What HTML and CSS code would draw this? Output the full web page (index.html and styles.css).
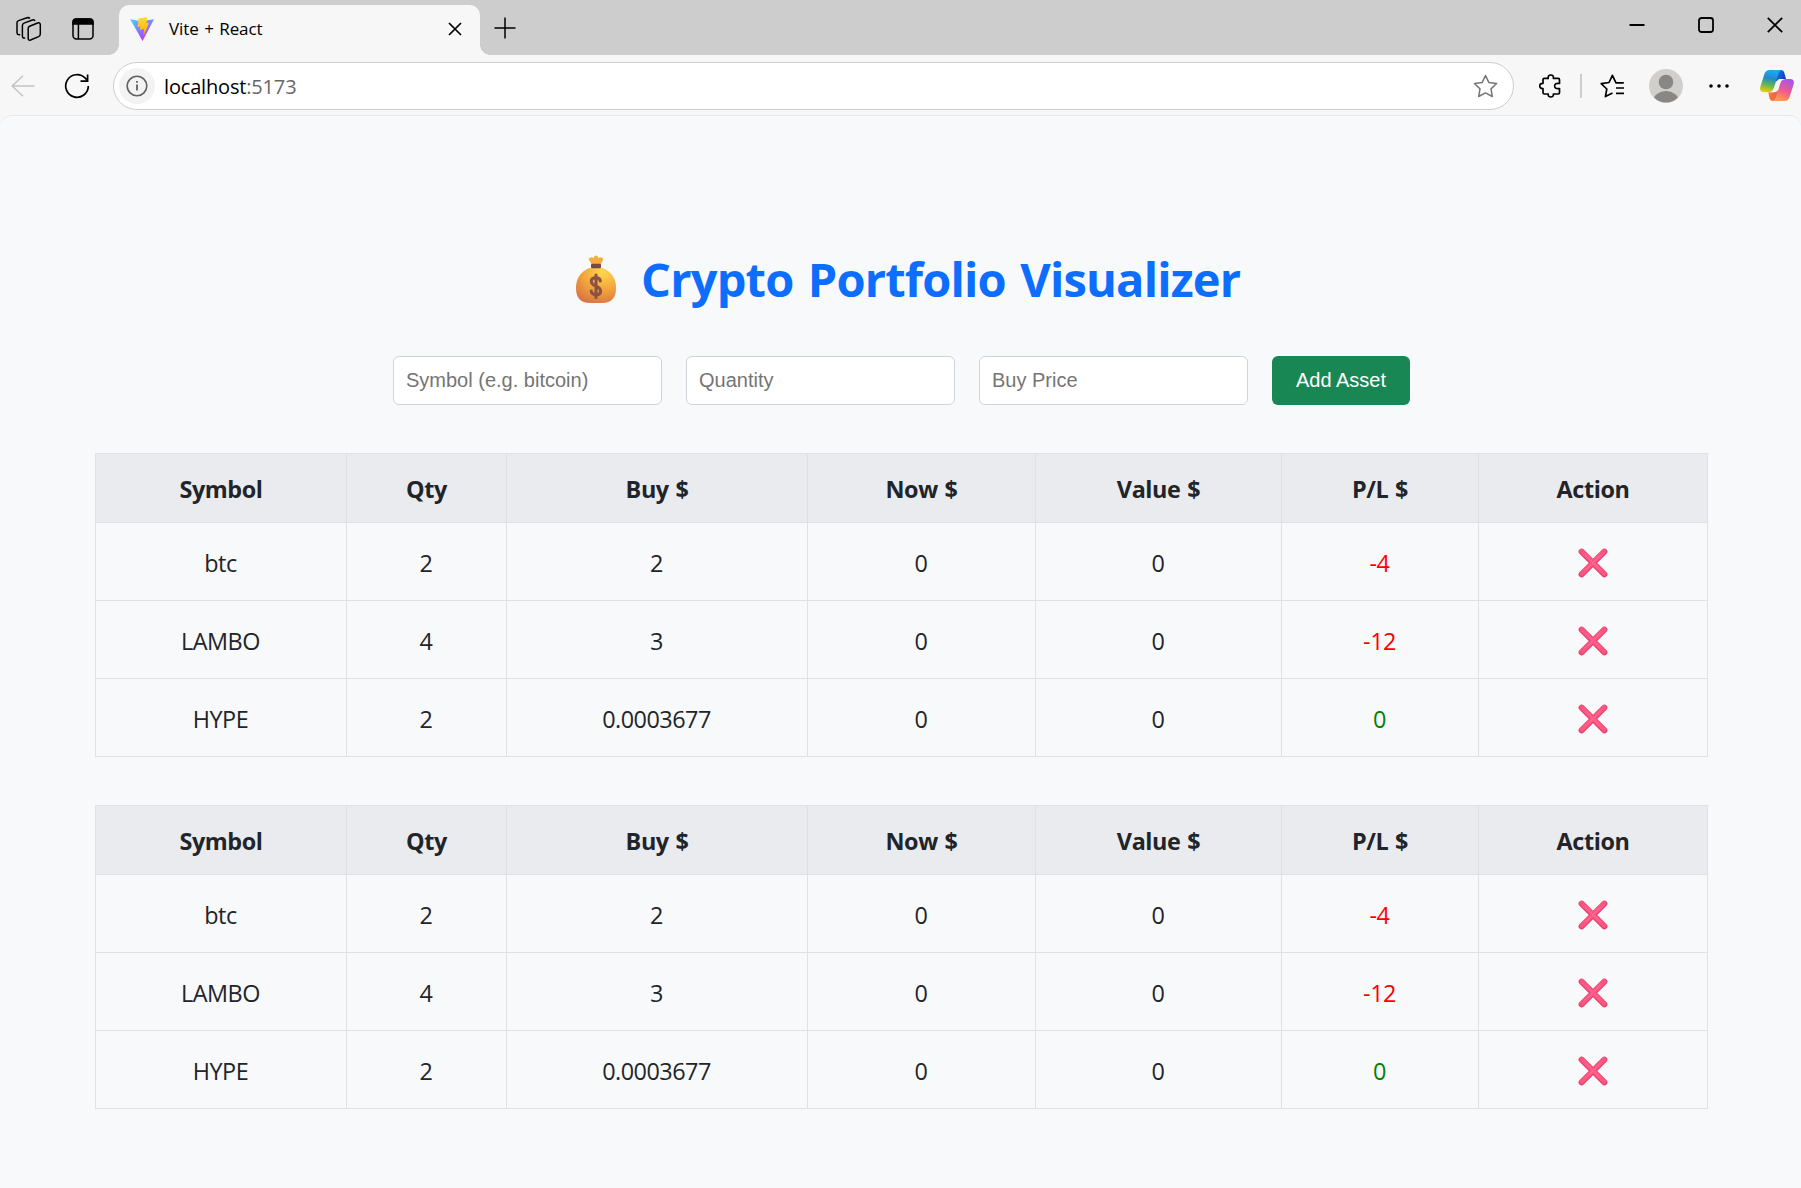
FILE: index.html
```html
<!DOCTYPE html>
<html lang="en">
<head>
<meta charset="utf-8">
<title>Vite + React</title>
<link rel="stylesheet" href="styles.css">
</head>
<body>
<svg class="defs" width="0" height="0" aria-hidden="true">
  <defs>
    <symbol id="cross" viewBox="0 0 30 30">
      <path d="M3.6 3.6 26.4 26.4M26.4 3.6 3.6 26.4" stroke="#e93e6c" stroke-width="6" stroke-linecap="round"/>
      <path d="M3.8 3.4 26.2 25.8M26.2 3.4 3.8 25.8" stroke="#fb5680" stroke-width="4.4" stroke-linecap="round"/>
      <path d="M8 7.7 22 21.7M22 7.7 8 21.7" stroke="#ff6593" stroke-width="1.6" stroke-linecap="round"/>
    </symbol>
  </defs>
</svg>
<header class="browser">
  <div class="tabstrip">
    <svg class="ico workspaces" width="26" height="26" viewBox="0 0 26 26"><path d="M13.6 9.4 21.6 6.2Q24.3 5.4 24.3 8V17.2Q24.3 19 22.6 19.8L14.6 23.2Q12.2 24 12.2 21.6V11.4Q12.2 10 13.6 9.4ZM9.2 21.2Q6.4 21.8 6.4 19.2V8.6Q6.4 7 8 6.3L16.4 3.2Q18.4 2.6 19 4.2M4.2 17.8Q1 18.4 1 15.6V6Q1 4.4 2.6 3.8L11 1Q13 .4 13.8 1.8" transform="translate(0 .8)"/></svg>
    <svg class="ico sidebar" width="22" height="22" viewBox="0 0 22 22"><rect x="1" y="1" width="20" height="20" rx="3.5"/><path d="M1 6V4Q1 1 4 1H18Q21 1 21 4V6Z" fill="#000"/><path d="M6.4 6V21"/></svg>
    <div class="tab">
      <svg width="24" height="24" viewBox="0 0 24 24"><defs><linearGradient id="v" x1="0" y1="0" x2=".6" y2="1"><stop offset="0" stop-color="#41d1ff"/><stop offset="1" stop-color="#bd34fe"/></linearGradient><linearGradient id="b" x1="0" y1="0" x2="0" y2="1"><stop offset="0" stop-color="#ffdd35"/><stop offset="1" stop-color="#ffa800"/></linearGradient></defs><path d="M.2 2.2 11 4.2 24 2.2 12.5 24Z" fill="url(#v)"/><path d="M8.6 1.4 17.4 0 16.5 6.2 19 5.8 13.5 19 14 12 9.8 12.8 10.4 9.5 7.6 10Z" fill="url(#b)"/></svg>
      <span class="tab-title">Vite + React</span>
      <svg class="ico tab-close" width="14" height="14" viewBox="0 0 14 14"><path d="M1 1 13 13M13 1 1 13" stroke-width="1.7"/></svg>
    </div>
    <svg class="ico new-tab" width="22" height="22" viewBox="0 0 22 22"><path d="M.5 11H21.5M11 .5V21.5"/></svg>
    <div class="window-buttons">
      <svg class="ico" width="16" height="16" viewBox="0 0 16 16"><path d="M.5 8H15.5" stroke-width="2"/></svg>
      <svg class="ico" width="16" height="16" viewBox="0 0 16 16"><rect x="1" y="1" width="14" height="14" rx="2.5" stroke-width="1.8"/></svg>
      <svg class="ico" width="16" height="16" viewBox="0 0 16 16"><path d="M.8.8 15.2 15.2M15.2.8.8 15.2" stroke-width="1.8"/></svg>
    </div>
  </div>
  <div class="toolbar">
    <svg class="ico back" width="24" height="22" viewBox="0 0 24 22"><path d="M23.5 11H1.2M12 .8 1.2 11 12 21.2"/></svg>
    <svg class="ico reload" width="26" height="26" viewBox="0 0 26 26"><path d="M24.3 13A11.3 11.3 0 1 1 21.2 5.2L23.4 7.5M23.6 1.5V8.2H16.5" stroke-width="1.7"/></svg>
    <div class="address">
      <span class="info"><svg width="22" height="22" viewBox="0 0 22 22"><circle cx="11" cy="11" r="9.8"/><path d="M11 9.5V15.5M11 6V7.8" stroke-width="1.8"/></svg></span>
      <span class="url">localhost<span class="port">:5173</span></span>
      <svg class="star" width="25" height="24" viewBox="0 0 25 24"><path d="M12.5 1.5 15.8 8.4 23.6 9.5 18 14.9 19.3 22.5 12.5 18.9 5.7 22.5 7 14.9 1.4 9.5 9.2 8.4Z" stroke-linejoin="round"/></svg>
    </div>
    <svg class="ico puzzle" width="22" height="24" viewBox="0 0 22 24"><path d="M5.2 4.4H9.2Q8.9 1 11.8 1T14.4 4.4H19.2Q20.5 4.4 20.5 5.7V9.5Q15.6 8.7 15.6 12T20.5 14.5V18.7Q20.5 20 19.2 20H14.4Q14.6 23 11.8 23T9.2 20H5.4Q4 20 4 18.7V14.6Q.8 14.7.8 12T4 9.4V5.7Q4 4.4 5.2 4.4Z" stroke-width="1.7" stroke-linejoin="round"/></svg>
    <span class="divider"></span>
    <svg class="ico favorites" width="25" height="24" viewBox="0 0 25 24"><path d="M23.8 8.8H16L12.4 1.3 9 8.5 1.2 9.7 6.8 15 5.4 22.6 12.5 19M16 14H24M16 19.3H24" stroke-width="1.7" stroke-linejoin="round"/></svg>
    <svg class="avatar" width="34" height="34" viewBox="0 0 34 34"><defs><clipPath id="av"><circle cx="17" cy="17" r="16.5"/></clipPath></defs><circle cx="17" cy="17" r="17" fill="#d1cfcb"/><g clip-path="url(#av)" fill="#898785"><circle cx="17" cy="13" r="7.3"/><ellipse cx="17" cy="32" rx="12.7" ry="10"/></g></svg>
    <svg class="more" width="20" height="4" viewBox="0 0 20 4"><circle cx="2" cy="2" r="1.8"/><circle cx="10" cy="2" r="1.8"/><circle cx="18" cy="2" r="1.8"/></svg>
    <svg class="copilot" width="34" height="31" viewBox="0 0 34 31">
      <defs>
        <linearGradient id="c1" x1=".4" y1="0" x2=".2" y2="1"><stop offset="0" stop-color="#1ba9f5"/><stop offset=".35" stop-color="#2389c9"/><stop offset=".65" stop-color="#67b650"/><stop offset="1" stop-color="#f5cf08"/></linearGradient>
        <linearGradient id="c2" x1=".7" y1="0" x2=".3" y2="1"><stop offset="0" stop-color="#a655ee"/><stop offset=".5" stop-color="#ed5a91"/><stop offset="1" stop-color="#ffa052"/></linearGradient>
        <linearGradient id="c3" x1="0" y1="0" x2="1" y2=".4"><stop offset="0" stop-color="#1689e8"/><stop offset="1" stop-color="#123fc2"/></linearGradient>
        <linearGradient id="c4" x1="0" y1="0" x2="1" y2="0"><stop offset="0" stop-color="#fa7a38"/><stop offset="1" stop-color="#f2534b"/></linearGradient>
      </defs>
      <path d="M16 0H20.8Q23.5 0 24.3 2.8L26 9H20.5Q18 9 17 11.5L14 10Z" fill="url(#c3)"/>
      <path d="M8.3 22.2H13.5Q16 22.2 17 19.6L20 21 18 31H13Q10.2 31 9.4 28Z" fill="url(#c4)"/>
      <path d="M9.5 0H21.5Q19.2.8 18.2 4L14 18Q12.6 22.3 8.5 22.3H4Q-1 22.3.4 16.5L4.4 4Q5.8 0 9.5 0Z" fill="url(#c1)"/>
      <path d="M24.5 31H12.5Q14.8 30.2 15.8 27L20.2 13Q21.6 8.9 25.5 8.9H30Q35 8.9 33.6 14.5L29.6 27Q28.2 31 24.5 31Z" fill="url(#c2)"/>
      <path d="M20.8 9H25.6Q21.7 9.2 20.3 13L18.2 19.5Q17.2 22.2 14 22.2H8.6Q12.6 22.2 14 18L16.5 12Q17.6 9 20.8 9Z" fill="#f7f7f7"/>
    </svg>
  </div>
</header>
<main class="page">
  <h1 class="heading">
    <svg width="42" height="50" viewBox="0 0 42 50"><defs><radialGradient id="bag" cx=".68" cy=".12" r=".95"><stop offset="0" stop-color="#fed84e"/><stop offset=".5" stop-color="#f3a83c"/><stop offset="1" stop-color="#d97343"/></radialGradient></defs><path d="M14 14H28Q41 20 41 34 41 49 27 49H15Q1 49 1 34 1 20 14 14Z" fill="url(#bag)"/><path d="M17 11 13.5 5Q16 2.2 18.3 4 21 -.8 23.5 4 26.2 2.2 28.4 5L25.5 11Z" fill="#f8ac3d"/><rect x="16" y="9.8" width="10" height="4.4" rx="1.2" fill="#79493f"/><path d="M25.3 27Q25 23.8 21 23.8 16.3 23.8 16.3 27.3 16.3 30.3 21 32.3 25.6 34.3 25.6 37.2 25.6 40.6 21 40.6 16.4 40.6 16.2 37M21 21V43.4" fill="none" stroke="#8d5144" stroke-width="3.1" stroke-linecap="round"/></svg>
    <span>Crypto Portfolio Visualizer</span>
  </h1>
  <form class="asset-form">
    <input class="field" placeholder="Symbol (e.g. bitcoin)">
    <input class="field" placeholder="Quantity">
    <input class="field" placeholder="Buy Price">
    <button class="add" type="button">Add Asset</button>
  </form>
  <table class="assets">
    <colgroup><col class="c-symbol"><col class="c-qty"><col class="c-buy"><col class="c-now"><col class="c-value"><col class="c-pl"><col class="c-action"></colgroup>
    <thead><tr><th>Symbol</th><th>Qty</th><th>Buy $</th><th>Now $</th><th>Value $</th><th>P/L $</th><th>Action</th></tr></thead>
    <tbody>
      <tr><td>btc</td><td>2</td><td>2</td><td>0</td><td>0</td><td class="loss">-4</td><td><svg class="remove"><use href="#cross"/></svg></td></tr>
      <tr><td>LAMBO</td><td>4</td><td>3</td><td>0</td><td>0</td><td class="loss">-12</td><td><svg class="remove"><use href="#cross"/></svg></td></tr>
      <tr><td>HYPE</td><td>2</td><td>0.0003677</td><td>0</td><td>0</td><td class="gain">0</td><td><svg class="remove"><use href="#cross"/></svg></td></tr>
    </tbody>
  </table>
  <table class="assets">
    <colgroup><col class="c-symbol"><col class="c-qty"><col class="c-buy"><col class="c-now"><col class="c-value"><col class="c-pl"><col class="c-action"></colgroup>
    <thead><tr><th>Symbol</th><th>Qty</th><th>Buy $</th><th>Now $</th><th>Value $</th><th>P/L $</th><th>Action</th></tr></thead>
    <tbody>
      <tr><td>btc</td><td>2</td><td>2</td><td>0</td><td>0</td><td class="loss">-4</td><td><svg class="remove"><use href="#cross"/></svg></td></tr>
      <tr><td>LAMBO</td><td>4</td><td>3</td><td>0</td><td>0</td><td class="loss">-12</td><td><svg class="remove"><use href="#cross"/></svg></td></tr>
      <tr><td>HYPE</td><td>2</td><td>0.0003677</td><td>0</td><td>0</td><td class="gain">0</td><td><svg class="remove"><use href="#cross"/></svg></td></tr>
    </tbody>
  </table>
</main>
</body>
</html>
```
FILE: styles.css
```css
* { box-sizing: border-box; }
body {
  margin: 0;
  height: 1188px;
  overflow: hidden;
  display: flex;
  flex-direction: column;
  background: #f7f7f7;
  color: #212529;
  font-family: "Segoe UI", "Open Sans", "Noto Sans", sans-serif;
}
svg { display: block; flex: none; }
.defs { position: absolute; }
.ico { fill: none; stroke: #000; stroke-width: 1.5; }

/* Browser chrome */
.tabstrip {
  height: 55px;
  display: flex;
  align-items: center;
  background: #cdcdcd;
}
.workspaces { margin: 3px 0 0 16px; }
.sidebar { margin: 3px 0 0 30px; }
.tab {
  position: relative;
  align-self: flex-end;
  width: 361px;
  height: 50px;
  margin-left: 25px;
  padding: 0 18px 2px 11px;
  display: flex;
  align-items: center;
  background: #f7f7f7;
  border-radius: 10px 10px 0 0;
}
.tab::before, .tab::after {
  content: "";
  position: absolute;
  bottom: 0;
  width: 10px;
  height: 10px;
}
.tab::before { left: -10px; background: radial-gradient(circle at 0 0, transparent 9.5px, #f7f7f7 10px); }
.tab::after { right: -10px; background: radial-gradient(circle at 100% 0, transparent 9.5px, #f7f7f7 10px); }
.tab-title { margin: 0 0 2px 15px; color: #000; font-size: 17px; word-spacing: 1.2px; letter-spacing: -.1px; }
.tab-close { margin-left: auto; }
.new-tab { margin-left: 14px; }
.window-buttons { margin: 0 18px 5px auto; display: flex; gap: 53px; }

.toolbar {
  height: 60px;
  padding-top: 1px;
  display: flex;
  align-items: center;
}
.back { margin-left: 11px; stroke: #c4c4c4; }
.reload { margin-left: 29px; }
.address {
  width: 1401px;
  height: 48px;
  margin: 1px 0 0 23px;
  padding: 0 15px 0 5px;
  display: flex;
  align-items: center;
  background: #fff;
  border: 1px solid #cdcdcd;
  border-radius: 24px;
}
.info {
  width: 36px;
  height: 36px;
  display: grid;
  place-items: center;
  border-radius: 50%;
  background: #f3f3f3;
}
.info svg { fill: none; stroke: #616161; stroke-width: 1.6; }
.url { margin-left: 9px; color: #000; font-size: 20px; letter-spacing: -.17px; }
.port { color: #666; }
.star { margin-left: auto; fill: none; stroke: #767676; stroke-width: 1.5; }
.puzzle { margin-left: 25px; }
.divider { width: 2px; height: 24px; margin-left: 19px; background: #cdcdcd; }
.favorites { margin-left: 18px; }
.avatar { margin-left: 24px; }
.more { margin-left: 26px; }
.copilot { margin-left: 31px; }

/* Portfolio page */
.page {
  flex: 1;
  padding: 131px 93px 0 95px;
  background: #f8f9fb;
  border-top: 1px solid #e7e7e7;
  border-radius: 12px 12px 0 0;
}
.heading {
  height: 64px;
  margin: 0 0 45px;
  padding-left: 480px;
  display: flex;
  align-items: center;
  gap: 24px;
  color: #0d6efd;
  font-size: 47px;
  font-weight: 700;
  line-height: 64px;
  letter-spacing: -.8px;
  word-spacing: 2.8px;
  white-space: nowrap;
}
.asset-form { display: flex; gap: 24px; margin: 0 0 48px 298px; }
.field {
  width: 269px;
  height: 49px;
  padding: 0 12px;
  border: 1px solid #ced4da;
  border-radius: 6px;
  background: #fff;
  font: 20px "Liberation Sans", Arial, sans-serif;
}
.field::placeholder { color: #757575; }
.add {
  width: 138px;
  height: 49px;
  padding: 0;
  border: 0;
  border-radius: 6px;
  background: #198754;
  color: #fff;
  font: 20px "Liberation Sans", Arial, sans-serif;
}
.assets {
  width: 1613px;
  margin-bottom: 48px;
  table-layout: fixed;
  border-collapse: collapse;
  text-align: center;
}
.c-symbol { width: 251px; }
.c-qty { width: 160px; }
.c-buy { width: 301px; }
.c-now { width: 228px; }
.c-value { width: 246px; }
.c-pl { width: 197px; }
.c-action { width: 229px; }
.assets th, .assets td {
  padding: 0;
  border: 1px solid #dee2e6;
  line-height: 36px;
}
.assets th { height: 69px; padding-top: 2px; background: #eaebef; font-size: 23.4px; font-weight: 700; letter-spacing: -.4px; word-spacing: 1px; }
.assets td { height: 78px; padding: 2px 1px 0 0; font-size: 23.4px; letter-spacing: -.5px; }
.assets .loss { color: #f00; }
.assets .gain { color: #008000; }
.remove { width: 30px; height: 30px; margin: 1px auto 0; fill: none; }
```
